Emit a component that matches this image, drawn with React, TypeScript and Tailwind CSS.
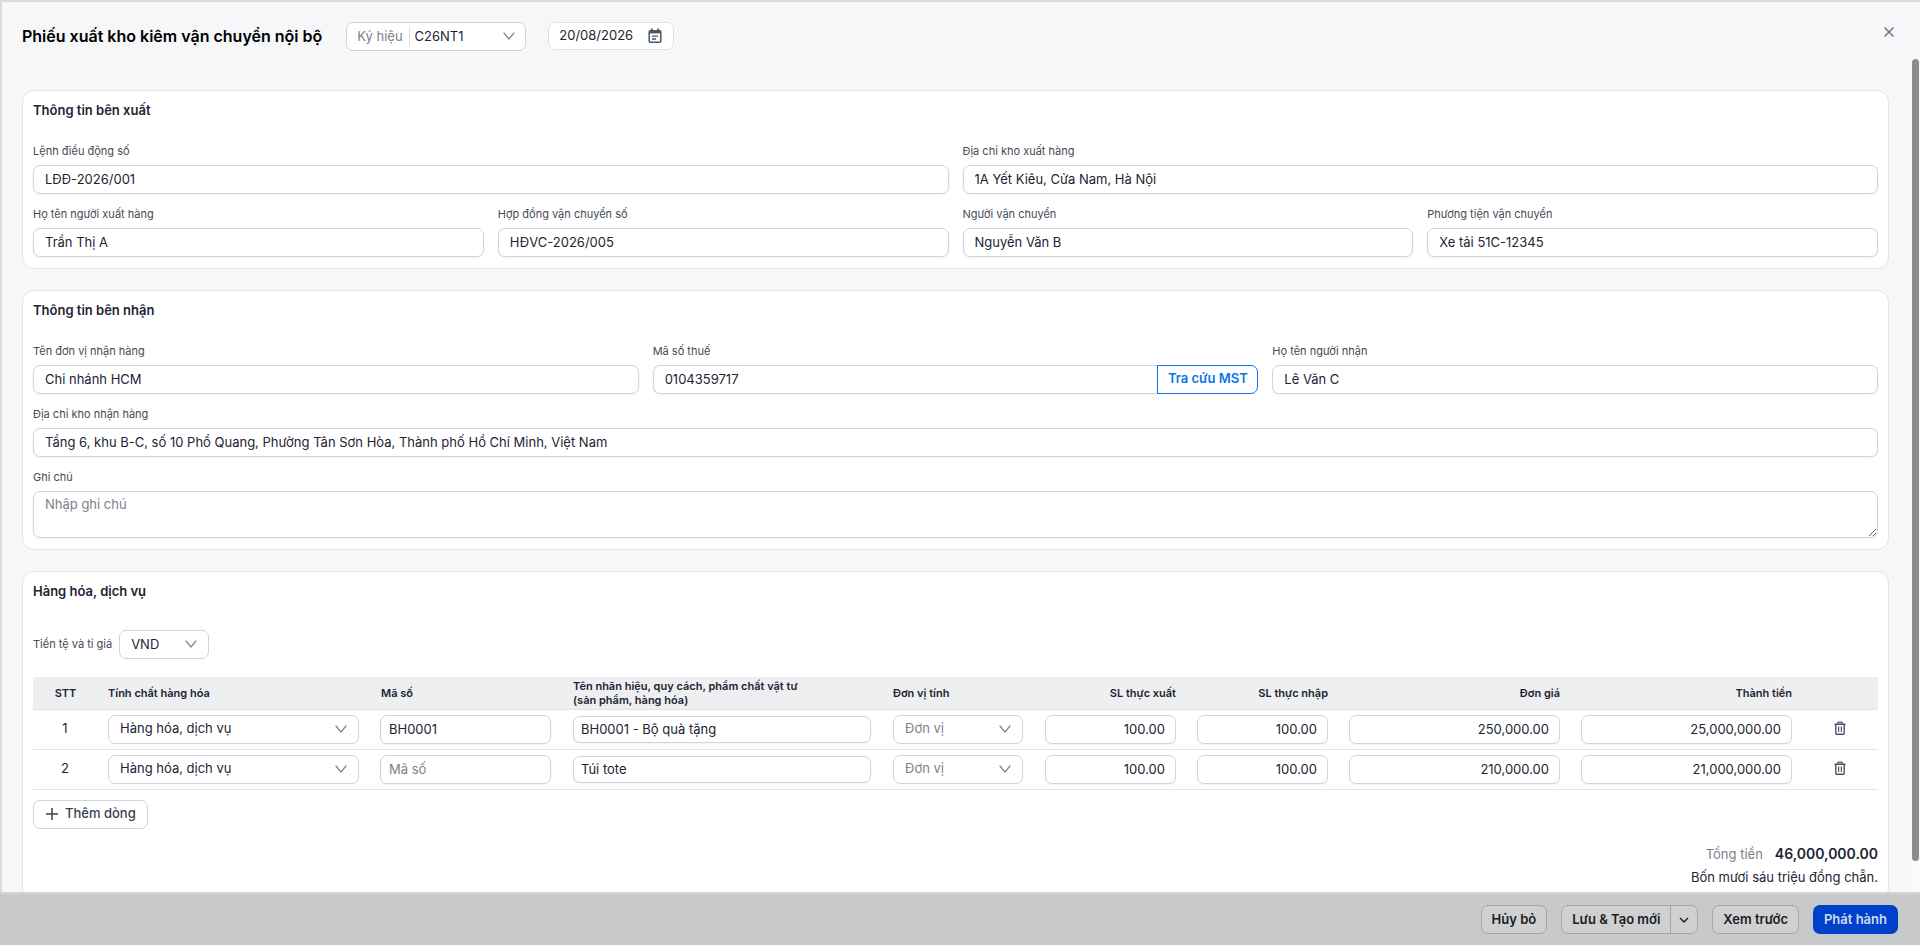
import { useState } from "react";
import type { ReactNode } from "react";

const INPUT =
  "w-full rounded-[7px] border border-[#cfd3da] bg-white text-[13px] text-[#1d2433] shadow-xs outline-none placeholder:text-[#7b818c]";

type Line = {
  id: number;
  code: string;
  name: string;
  exported: string;
  imported: string;
  price: string;
  total: string;
};

const LINES: Line[] = [
  { id: 1, code: "BH0001", name: "BH0001 - Bộ quà tặng", exported: "100.00", imported: "100.00", price: "250,000.00", total: "25,000,000.00" },
  { id: 2, code: "", name: "Túi tote", exported: "100.00", imported: "100.00", price: "210,000.00", total: "21,000,000.00" },
];

function Chevron({ className }: { className: string }) {
  return (
    <svg className={className} viewBox="0 0 12 12" fill="none" stroke="currentColor" strokeWidth="1.2" strokeLinecap="round" strokeLinejoin="round" aria-hidden="true">
      <path d="M1 3l5 6 5-6" />
    </svg>
  );
}

function CalendarIcon() {
  return (
    <svg className="h-4 w-4 text-[#4b5768]" viewBox="0 0 16 16" fill="none" stroke="currentColor" strokeWidth="1.5" aria-hidden="true">
      <rect x="2.2" y="2.7" width="11.6" height="11.6" rx="1.2" />
      <path d="M2 3.9h12" strokeWidth="3" />
      <path d="M4.8 .6v3M11.2 .6v3" strokeWidth="1.8" />
      <path d="M5 8.2h6M5 11h4" strokeWidth="1.3" />
    </svg>
  );
}

function TrashIcon() {
  return (
    <svg className="h-3.5 w-3.5" viewBox="0 0 14 14" fill="none" stroke="currentColor" strokeWidth="1.4" strokeLinejoin="round" aria-hidden="true">
      <path d="M1.5 3.3h11M4.8 3V1.9a.8 .8 0 0 1 .8-.8h2.8a.8 .8 0 0 1 .8 .8V3M2.8 3.4v8.8a1 1 0 0 0 1 1h6.4a1 1 0 0 0 1-1V3.4" />
      <path d="M5.6 5.4v5.6M8.4 5.4v5.6" strokeWidth="1.2" />
    </svg>
  );
}

function Card({ title, children }: { title: string; children: ReactNode }) {
  return (
    <section className="rounded-xl border border-[#e1e4e8] bg-white px-2.5 pt-[9px] pb-[11px]">
      <h2 className="text-[13px] leading-5 font-semibold text-[#1d2433]">{title}</h2>
      {children}
    </section>
  );
}

function Field({ id, label, value }: { id: string; label: string; value: string }) {
  return (
    <div>
      <label htmlFor={id} className="mb-1.5 block text-[11px] leading-4 text-[#454b57]">{label}</label>
      <input id={id} defaultValue={value} className={`${INPUT} block h-[29px] px-[11px] pb-0.5`} />
    </div>
  );
}

function Select({ label, options, muted }: { label: string; options: string[]; muted?: boolean }) {
  return (
    <div className="relative">
      <select aria-label={label} className={`block h-[29px] w-full appearance-none rounded-[7px] border border-[#cfd3da] bg-white pr-8 pl-[11px] text-[13px] outline-none ${muted ? "text-[#7b818c]" : "text-[#1d2433]"}`}>
        {options.map((o) => (
          <option key={o}>{o}</option>
        ))}
      </select>
      <Chevron className="pointer-events-none absolute top-2 right-3 h-3 w-3 text-[#7d8794]" />
    </div>
  );
}

function ItemRow({ line, onRemove }: { line: Line; onRemove: () => void }) {
  const amounts = [
    { label: "SL thực xuất", value: line.exported },
    { label: "SL thực nhập", value: line.imported },
    { label: "Đơn giá", value: line.price },
    { label: "Thành tiền", value: line.total },
  ];
  return (
    <tr className="h-10 border-b border-[#e1e4e8]">
      <td className="text-center text-[13px] text-[#1d2433]">{line.id}</td>
      <td className="px-[11px]">
        <Select label="Tính chất hàng hóa" options={["Hàng hóa, dịch vụ"]} />
      </td>
      <td className="pr-[11px] pl-2.5">
        <input aria-label="Mã số" placeholder="Mã số" defaultValue={line.code} className={`${INPUT} block h-[29px] px-2`} />
      </td>
      <td className="px-[11px]">
        <input aria-label="Tên nhãn hiệu" defaultValue={line.name} className={`${INPUT} block h-[27px] px-[7px]`} />
      </td>
      <td className="px-[11px]">
        <Select label="Đơn vị tính" options={["Đơn vị"]} muted />
      </td>
      {amounts.map((a) => (
        <td key={a.label} className="pr-2.5 pl-[11px]">
          <input aria-label={a.label} defaultValue={a.value} className={`${INPUT} block h-[29px] px-2.5 text-right`} />
        </td>
      ))}
      <td className="pb-0.5">
        <button type="button" aria-label="Xóa dòng" onClick={onRemove} className="mx-auto block text-[#4b5768]">
          <TrashIcon />
        </button>
      </td>
    </tr>
  );
}

export default function App() {
  const [lines, setLines] = useState(LINES);

  const addLine = () =>
    setLines([...lines, { id: lines.length + 1, code: "", name: "", exported: "", imported: "", price: "", total: "" }]);

  return (
    <div className="flex h-screen flex-col border-t-2 border-[#d9dadc] bg-[#f6f7f9] font-['Inter','Noto_Sans',sans-serif] text-[#1d2433]">
      <header className="flex items-start border-l-2 border-[#d9dadc] pt-5 pr-[23px] pl-5">
        <h1 className="mr-6 text-[16px] leading-7 font-semibold text-black">Phiếu xuất kho kiêm vận chuyển nội bộ</h1>
        <div className="relative mr-[22px] flex h-[29px] w-[180px] items-center rounded-[7px] border border-[#cfd3da] bg-white">
          <label htmlFor="serial" className="border-r border-[#d9dce1] pr-1.5 pl-2.5 text-[13px] text-[#7b818c]">Ký hiệu</label>
          <select id="serial" className="flex-1 appearance-none pl-[5px] text-[13px] outline-none">
            <option>C26NT1</option>
          </select>
          <Chevron className="pointer-events-none absolute top-[7px] right-2.5 h-3 w-3 text-[#7d8794]" />
        </div>
        <div className="flex h-7 w-[126px] items-center rounded-[7px] border border-[#dcdfe4] bg-white px-2.5">
          <input aria-label="Ngày lập" defaultValue="20/08/2026" className="w-0 flex-1 text-[13px] outline-none" />
          <CalendarIcon />
        </div>
        <button type="button" aria-label="Đóng" className="mt-0.5 ml-auto text-[#6b7482]">
          <svg className="h-4 w-4" viewBox="0 0 16 16" fill="none" stroke="currentColor" strokeWidth="1.5" aria-hidden="true">
            <path d="M3.5 3.5l9 9M12.5 3.5l-9 9" />
          </svg>
        </button>
      </header>

      <div className="flex min-h-0 flex-1 border-l-2 border-[#d9dadc] pt-2">
        <main className="min-w-0 flex-1 overflow-hidden pt-[31px] pr-[22px] pl-5">
          <div className="flex flex-col gap-[21px]">
            <Card title="Thông tin bên xuất">
              <div className="mt-[23px] grid grid-cols-4 gap-x-3.5 gap-y-3">
                <div className="col-span-2">
                  <Field id="order-no" label="Lệnh điều động số" value="LĐĐ-2026/001" />
                </div>
                <div className="col-span-2">
                  <Field id="from-address" label="Địa chỉ kho xuất hàng" value="1A Yết Kiêu, Cửa Nam, Hà Nội" />
                </div>
                <Field id="sender" label="Họ tên người xuất hàng" value="Trần Thị A" />
                <Field id="contract" label="Hợp đồng vận chuyển số" value="HĐVC-2026/005" />
                <Field id="carrier" label="Người vận chuyển" value="Nguyễn Văn B" />
                <Field id="vehicle" label="Phương tiện vận chuyển" value="Xe tải 51C-12345" />
              </div>
            </Card>

            <Card title="Thông tin bên nhận">
              <div className="mt-[23px] grid grid-cols-3 gap-x-3.5 gap-y-3">
                <Field id="receiver-unit" label="Tên đơn vị nhận hàng" value="Chi nhánh HCM" />
                <div>
                  <label htmlFor="tax" className="mb-1.5 block text-[11px] leading-4 text-[#454b57]">Mã số thuế</label>
                  <div className="flex">
                    <input id="tax" defaultValue="0104359717" className={`${INPUT} h-[29px] min-w-0 flex-1 rounded-r-none border-r-0 px-[11px] pb-0.5`} />
                    <button type="button" className="h-[29px] w-[101px] shrink-0 rounded-r-[7px] border border-[#0a73eb] pb-0.5 text-[13px] font-semibold text-[#0a73eb]">Tra cứu MST</button>
                  </div>
                </div>
                <Field id="receiver" label="Họ tên người nhận" value="Lê Văn C" />
                <div className="col-span-3">
                  <Field id="to-address" label="Địa chỉ kho nhận hàng" value="Tầng 6, khu B-C, số 10 Phổ Quang, Phường Tân Sơn Hòa, Thành phố Hồ Chí Minh, Việt Nam" />
                </div>
                <div className="col-span-3">
                  <label htmlFor="note" className="mb-1.5 block text-[11px] leading-4 text-[#454b57]">Ghi chú</label>
                  <textarea id="note" placeholder="Nhập ghi chú" className={`${INPUT} block h-[47px] resize-y px-[11px] py-[3px] leading-[18px]`} />
                </div>
              </div>
            </Card>

            <Card title="Hàng hóa, dịch vụ">
              <div className="mt-[29px] mb-[18px] flex items-center gap-[7px]">
                <span className="text-[11px] text-[#454b57]">Tiền tệ và tỉ giá</span>
                <div className="w-[90px]">
                  <Select label="Tiền tệ" options={["VND"]} />
                </div>
              </div>

              <table className="w-full table-fixed border-collapse">
                <colgroup>
                  <col className="w-16" />
                  <col className="w-[273px]" />
                  <col className="w-[192px]" />
                  <col />
                  <col className="w-[152px]" />
                  <col className="w-[152px]" />
                  <col className="w-[152px]" />
                  <col className="w-[232px]" />
                  <col className="w-[232px]" />
                  <col className="w-[76px]" />
                </colgroup>
                <thead>
                  <tr className="h-8 border-b border-[#dfe1e5] bg-[#eeeff1] text-left text-[11px] leading-[14px] [&>th]:pr-2.5 [&>th]:pl-[11px] [&>th]:font-semibold">
                    <th className="text-center">STT</th>
                    <th>Tính chất hàng hóa</th>
                    <th>Mã số</th>
                    <th>
                      Tên nhãn hiệu, quy cách, phẩm chất vật tư
                      <br />
                      (sản phẩm, hàng hóa)
                    </th>
                    <th>Đơn vị tính</th>
                    <th className="text-right">SL thực xuất</th>
                    <th className="text-right">SL thực nhập</th>
                    <th className="text-right">Đơn giá</th>
                    <th className="text-right">Thành tiền</th>
                    <th />
                  </tr>
                </thead>
                <tbody>
                  {lines.map((line) => (
                    <ItemRow key={line.id} line={line} onRemove={() => setLines(lines.filter((l) => l.id !== line.id))} />
                  ))}
                </tbody>
              </table>

              <button type="button" onClick={addLine} className="mt-2.5 flex h-[29px] items-center gap-1.5 rounded-[7px] border border-[#cfd3da] px-[11px] text-[13px] font-medium text-[#3a414e]">
                <svg className="h-3.5 w-3.5" viewBox="0 0 14 14" fill="none" stroke="currentColor" strokeWidth="1.5" aria-hidden="true">
                  <path d="M7 1v12M1 7h12" />
                </svg>
                Thêm dòng
              </button>

              <div className="mt-[13px] text-right text-[13px]">
                <p className="leading-6">
                  <span className="mr-3 text-[#7b818c]">Tổng tiền</span>
                  <strong className="text-[14px] font-semibold">46,000,000.00</strong>
                </p>
                <p className="leading-[22px]">Bốn mươi sáu triệu đồng chẵn.</p>
              </div>
            </Card>
          </div>
        </main>
        <div className="w-[9px] shrink-0 bg-[#fafafa] px-px">
          <div className="h-[802px] max-h-full rounded-full bg-[#8c8c8c]" />
        </div>
      </div>

      <footer className="flex h-[53px] shrink-0 items-center justify-end border-t-2 border-[#d3d4d5] bg-[#c8c9ca] pr-[22px] text-[13px] font-semibold text-[#181d27]">
        <button type="button" className="mr-3.5 h-[29px] rounded-[7px] border border-[#a3a6ab] bg-[#d0d0d0] px-2.5">Hủy bỏ</button>
        <div className="mr-3.5 flex h-[29px] rounded-[7px] border border-[#a3a6ab] bg-[#d0d0d0]">
          <button type="button" className="px-2.5">Lưu &amp; Tạo mới</button>
          <button type="button" aria-label="Tùy chọn lưu" className="flex w-[27px] items-center justify-center border-l border-[#a3a6ab]">
            <svg className="h-2.5 w-2.5" viewBox="0 0 10 10" fill="none" stroke="currentColor" strokeWidth="1.4" aria-hidden="true">
              <path d="M1 3l4 4 4-4" />
            </svg>
          </button>
        </div>
        <button type="button" className="mr-3.5 h-[29px] rounded-[7px] border border-[#a3a6ab] bg-[#d0d0d0] px-2.5">Xem trước</button>
        <button type="button" className="h-[29px] rounded-[7px] bg-[#0041cb] px-[11px] text-[#cfd9ee]">Phát hành</button>
      </footer>
    </div>
  );
}
